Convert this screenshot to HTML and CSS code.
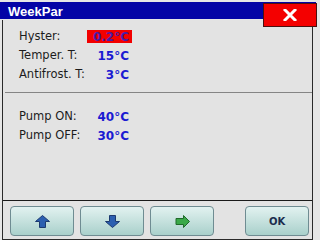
FILE: index.html
```html
<!DOCTYPE html>
<html>
<head>
<meta charset="utf-8">
<link rel="stylesheet" href="styles.css">
</head>
<body>
<div class="window">
  <div class="titlebar"><span class="title">WeekPar</span></div>
  <button class="close" aria-label="Close">
    <svg width="14" height="12" viewBox="0 0 14 12"><path d="M2 1 L12 11 M12 1 L2 11" stroke="#fff" stroke-width="3" stroke-linecap="square"/></svg>
  </button>
  <div class="content">
    <div class="group">
      <div class="row"><span class="label">Hyster:</span><span class="value selected">0.2°C</span></div>
      <div class="row"><span class="label">Temper. T:</span><span class="value">15°C</span></div>
      <div class="row"><span class="label">Antifrost. T:</span><span class="value">3°C</span></div>
    </div>
    <div class="sep"></div>
    <div class="group">
      <div class="row"><span class="label">Pump ON:</span><span class="value">40°C</span></div>
      <div class="row"><span class="label">Pump OFF:</span><span class="value">30°C</span></div>
    </div>
    <div class="footer">
      <button class="btn">
        <svg width="15" height="13" viewBox="0 0 15 13"><path d="M7.5 0.5 L14.5 6.5 L10.5 6.5 L10.5 12.5 L4.5 12.5 L4.5 6.5 L0.5 6.5 Z" fill="#2b5fb0" stroke="#1c3a70" stroke-width="1"/></svg>
      </button>
      <button class="btn">
        <svg width="15" height="13" viewBox="0 0 15 13"><path d="M7.5 12.5 L14.5 6.5 L10.5 6.5 L10.5 0.5 L4.5 0.5 L4.5 6.5 L0.5 6.5 Z" fill="#2b5fb0" stroke="#1c3a70" stroke-width="1"/></svg>
      </button>
      <button class="btn">
        <svg width="15" height="13" viewBox="0 0 15 13"><path d="M14.5 6.5 L8.5 0.5 L8.5 3.5 L1 3.5 L1 9.5 L8.5 9.5 L8.5 12.5 Z" fill="#3aa848" stroke="#1f6a2a" stroke-width="1"/></svg>
      </button>
      <button class="btn ok">OK</button>
    </div>
  </div>
</div>
</body>
</html>
```
FILE: styles.css
```css
html, body {
  margin: 0;
  padding: 0;
}
body {
  width: 320px;
  height: 240px;
  background: #e6e6e6;
  overflow: hidden;
}
.window {
  position: relative;
  width: 320px;
  height: 240px;
  padding-top: 2px;
  box-sizing: border-box;
  display: flex;
  flex-direction: column;
}
.titlebar {
  height: 17px;
  background: #0404a6;
  padding-left: 8px;
  margin-right: 4px;
}
.title {
  font-family: "Liberation Sans", Arial, sans-serif;
  font-weight: bold;
  font-size: 13px;
  line-height: 17px;
  color: #fff;
}
.close {
  position: absolute;
  left: 263px;
  top: 3px;
  width: 54px;
  height: 24px;
  margin: 0;
  padding: 0;
  background: #f40000;
  border: 1px solid #4a1010;
  display: flex;
  align-items: center;
  justify-content: center;
}
.content {
  margin-top: 1px;
  margin-left: 2px;
  margin-right: 7px;
  height: 217px;
  background: #e3e3e3;
  border-left: 1px solid #2a2a2a;
  border-right: 1px solid #2a2a2a;
  border-bottom: 1px solid #2a2a2a;
  display: flex;
  flex-direction: column;
  padding-top: 7px;
}
.group {
  display: flex;
  flex-direction: column;
  padding-left: 16px;
}
.row {
  height: 19px;
  display: flex;
  align-items: center;
}
.label {
  width: 68px;
  font-family: "DejaVu Sans", sans-serif;
  font-size: 11.5px;
  line-height: 19px;
  color: #1c1c1c;
}
.value {
  width: 42px;
  height: 13px;
  padding-right: 3px;
  text-align: right;
  font-family: "DejaVu Sans", sans-serif;
  font-weight: bold;
  font-size: 12px;
  line-height: 14px;
  color: #1a1ad2;
}
.value.selected {
  background: #f20000;
  color: #4a1ca8;
}
.sep {
  height: 1px;
  background: #858585;
  margin: 8px 0 14px 2px;
}
.footer {
  margin-top: auto;
  border-top: 1px solid #1a1a1a;
  padding: 5px 3px 3px 7px;
  display: flex;
  gap: 6px;
}
.btn {
  width: 64px;
  height: 30px;
  margin: 0;
  padding: 0;
  border: 1px solid #6f8c92;
  border-radius: 4px;
  background: linear-gradient(#e2f2f0, #a9d0cb);
  display: flex;
  align-items: center;
  justify-content: center;
}
.ok {
  margin-left: auto;
  font-family: "DejaVu Sans", sans-serif;
  font-weight: bold;
  font-size: 10px;
  color: #1a2c4c;
}
```
